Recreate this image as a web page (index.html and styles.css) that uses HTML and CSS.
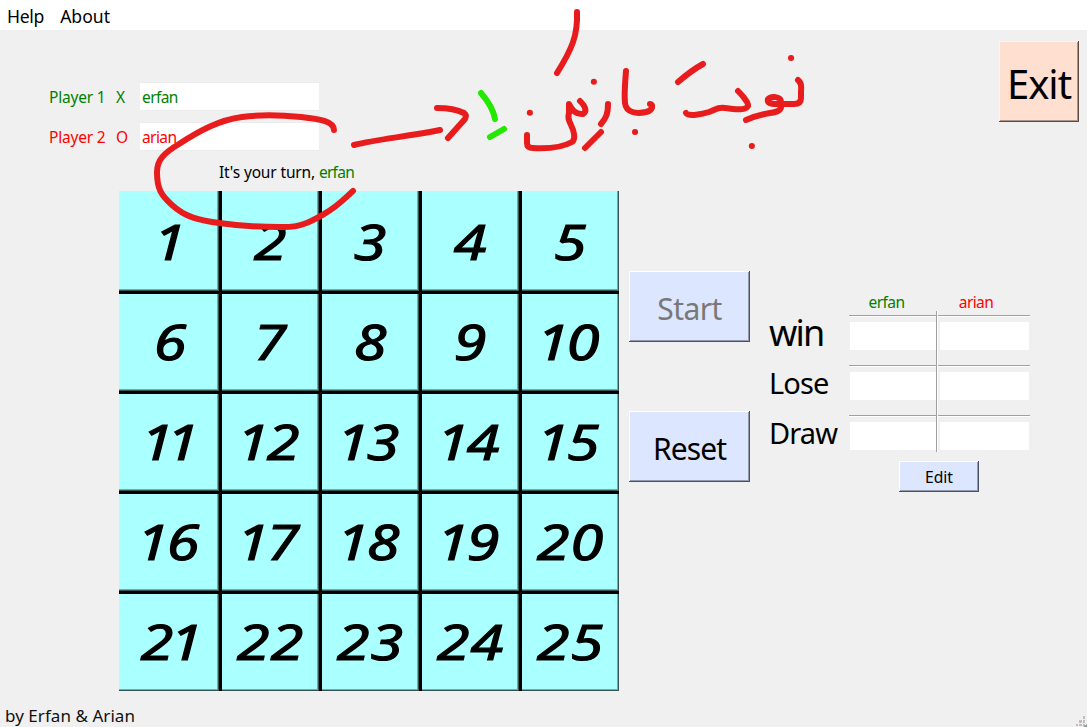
FILE: index.html
```html
<!DOCTYPE html>
<html lang="en">
<head>
<meta charset="utf-8">
<title>Tic Tac Toe</title>
<link rel="stylesheet" href="styles.css">
</head>
<body>
<nav class="menu"><span>Help</span><span>About</span></nav>
<main class="main">
  <section class="left">
    <div class="player green"><label class="name">Player 1</label><span class="mark">X</span><div class="field">erfan</div></div>
    <div class="player red"><label class="name">Player 2</label><span class="mark">O</span><div class="field">arian</div></div>
    <p class="turn">It's your turn, <span class="green tight">erfan</span></p>
    <div class="board">
      <div class="cell"><span><i class="one">1</i></span></div><div class="cell"><span><i>2</i></span></div><div class="cell"><span><i>3</i></span></div><div class="cell"><span><i>4</i></span></div><div class="cell"><span><i>5</i></span></div>
      <div class="cell"><span><i>6</i></span></div><div class="cell"><span><i>7</i></span></div><div class="cell"><span><i>8</i></span></div><div class="cell"><span><i>9</i></span></div><div class="cell"><span><i class="one">1</i><i>0</i></span></div>
      <div class="cell"><span class="eleven">11</span></div><div class="cell"><span><i class="one">1</i><i>2</i></span></div><div class="cell"><span><i class="one">1</i><i>3</i></span></div><div class="cell"><span><i class="one">1</i><i>4</i></span></div><div class="cell"><span><i class="one">1</i><i>5</i></span></div>
      <div class="cell"><span><i class="one">1</i><i>6</i></span></div><div class="cell"><span><i class="one">1</i><i>7</i></span></div><div class="cell"><span><i class="one">1</i><i>8</i></span></div><div class="cell"><span><i class="one">1</i><i>9</i></span></div><div class="cell"><span><i>2</i><i>0</i></span></div>
      <div class="cell"><span><i>2</i><i class="one">1</i></span></div><div class="cell"><span><i>2</i><i>2</i></span></div><div class="cell"><span><i>2</i><i>3</i></span></div><div class="cell"><span><i>2</i><i>4</i></span></div><div class="cell"><span><i>2</i><i>5</i></span></div>
    </div>
  </section>
  <section class="right">
    <button class="btn exit">Exit</button>
    <div class="panel">
      <div class="actions">
        <button class="btn start" disabled>Start</button>
        <button class="btn reset">Reset</button>
      </div>
      <div class="labels"><span class="win">win</span><span>Lose</span><span>Draw</span></div>
      <div class="score">
        <div class="table">
          <span class="head green">erfan</span><span></span><span class="head red arian">arian</span>
          <div class="slot"></div><div class="divider"></div><div class="slot second"></div>
          <div class="slot"></div><div class="slot second"></div>
          <div class="slot"></div><div class="slot second"></div>
        </div>
        <button class="btn edit">Edit</button>
      </div>
    </div>
  </section>
</main>
<footer class="footer"><span>by Erfan &amp; Arian</span>
  <svg class="grip" width="11" height="11" viewBox="0 0 11 11"><path d="M7 0h2v3h-2zM3 4h3v3h-3zM7 4h2v3h-2zM0 8h2v2h-2zM3 8h3v2h-3zM7 8h2v2h-2z" fill="#bfbfbf"/><path d="M7 11l4-3v3z" fill="#8d9994"/></svg>
</footer>
<svg class="ink" width="1087" height="727" viewBox="0 0 1087 727">
  <path d="M334 130C334 121 319 119 301 117C280 115 257 115 242 117C219 120 199 131 179 144C164 153 157 160 157 172C157 189 161 195 172 205C185 217 198 220 219 223C240 226 260 227 280 227C300 228 310 222 324 214C337 207 343 200 353 191"/>
  <path d="M354 145C378 139 405 137 440 130M437 108C451 108 458 110 464 113Q467 115 465 119L448 138"/>
  <path d="M577 12C578 35 572 49 557 73M529.8 112.8h.1M593.8 81.8h.1"/>
  <path d="M527 135V143Q527 148 533 148C550 149 563 147 572 142C576 139 574 131 571 125C568 119 568 117 569 113V104Q574 115 583 114Q589 110 580 101"/>
  <path d="M608 104C608 114 606 118 601 124M601 132L585 148"/>
  <path d="M626 71C625 85 624 94 625 103C626 113 637 114 646 112C654 110 653 104 650 104M635 132h.1"/>
  <path d="M678 82Q692 70 703 64M686 113C688 117 703 114 709 112C717 109 717 107 725 108C738 110 746 110 748 106C749 103 742 95 738 91"/>
  <path d="M791 58h.1M798 80Q802 83 801 91V98Q801 104 794 104H777C770 104 767 103 768 99C771 96 781 96 781 102C783 110 778 112 770 113C758 115 753 117 746 120M751.8 146h.1"/>
  <path class="lime" d="M481 93Q493 107 495 119M490 137L504 129"/>
</svg>
</body>
</html>
```
FILE: styles.css
```css
* { box-sizing: border-box; }
body {
  margin: 0;
  width: 1087px;
  height: 727px;
  overflow: hidden;
  display: flex;
  flex-direction: column;
  background: #f0f0f0;
  color: #000;
  font: 15.5px/20px "Noto Sans", sans-serif;
  letter-spacing: -.2px;
  position: relative;
}
.green { color: #008000; }
.red { color: #f00; }
.menu {
  height: 30px;
  background: #fff;
  display: flex;
  gap: 16px;
  padding: 5px 7px;
  font-size: 17.6px;
  line-height: 23px;
  letter-spacing: 0;
}
.menu span:first-child { letter-spacing: -.3px; }
.main { flex: 1; display: flex; }
.left { width: 629px; padding-top: 52px; }
.player { display: flex; height: 29px; margin: 0 0 11px 49px; align-items: center; }
.name { width: 67px; }
.mark { width: 24px; }
.name, .mark { padding-top: 1px; }
.field { width: 179px; height: 29px; padding: 5px 2px; background: #fff; border: 1px solid #ececec; border-width: 1px 0; letter-spacing: -.6px; line-height: 18px; }
.turn { margin: 0 0 9px 219px; height: 20px; letter-spacing: -.15px; white-space: nowrap; }
.tight { letter-spacing: -.7px; }
.board {
  margin-left: 119px;
  width: 500px;
  height: 500px;
  display: grid;
  grid-template: repeat(5, 100px) / repeat(5, 100px);
  border-top: 1px solid #d8ffff;
  border-left: 1px solid #d8ffff;
}
.cell {
  background: #aff;
  border: 0 solid #000;
  border-width: 3px 0 0 3px;
  box-shadow: inset -1px -1px #385555, inset -2px -2px #72aaaa;
  display: flex;
  align-items: center;
  justify-content: center;
  font-size: 49.5px;
  line-height: 60px;
  letter-spacing: 0;
  margin: -1px 1px 1px -1px;
}
.cell:nth-child(-n+5) { border-top: 0; padding-top: 3px; }
.cell:nth-child(5n+1) { border-left: 0; padding-left: 3px; }
.cell span { transform: scaleX(1.2); display: flex; margin: -4px 2px 0 0; }
.cell i, .eleven { -webkit-text-stroke: 1.1px #000; }
.cell i { width: 28px; text-align: center; }
.cell i.one { width: 22px; text-indent: -3px; }
.cell .eleven { font-style: italic; letter-spacing: -6px; margin-right: 8px; }
.right { flex: 1; padding: 11px 8px 0 0; display: flex; flex-direction: column; align-items: flex-start; }
.btn {
  background: #dce6ff;
  border: 0;
  padding: 0;
  font-family: inherit;
  color: #000;
  box-shadow: inset -1px -1px #495265, inset 1px 1px #fff, inset -2px -2px #929ab0;
}
.exit { align-self: flex-end; width: 80px; height: 81px; padding-top: 3px; background: #ffdfcf; font-size: 40px; letter-spacing: -1px; box-shadow: inset -1px -1px #5d4b43, inset 1px 1px #fff2eb, inset -2px -2px #aa958a; }
.panel { display: flex; margin-top: 149px; }
.actions { display: flex; flex-direction: column; gap: 69px; width: 121px; }
.start, .reset { height: 71px; padding-top: 3px; font-size: 30px; letter-spacing: -.9px; }
.start { color: #787878; letter-spacing: -.6px; }
.labels { display: flex; flex-direction: column; width: 80px; margin-left: 19px; padding-top: 37px; font-size: 29px; line-height: 50px; letter-spacing: -.9px; }
.win { font-size: 36px; letter-spacing: -1.8px; }
.score { padding-top: 20px; display: flex; flex-direction: column; }
.table { display: grid; grid-template: 24px repeat(3, 50px) / 87px 2px 92px; }
.head { text-align: center; letter-spacing: -.6px; line-height: 22px; padding-right: 12px; }
.arian { padding-right: 16px; }
.slot { border-top: 1px solid #a0a0a0; box-shadow: inset 0 1px #fff; padding: 6px 0 0 1px; }
.slot::before { content: ""; display: block; height: 28px; background: #fff; }
.second { padding: 6px 1px 0 2px; }
.divider { grid-row: 2 / 5; grid-column: 2; border-left: 1px solid #a0a0a0; background: #fff; margin: -4px 0 13px; }
.edit { width: 80px; height: 31px; margin: -4px 0 0 50px; font-size: 15.7px; position: relative; }
.footer { height: 22px; display: flex; justify-content: space-between; align-items: flex-end; padding-left: 5px; font-size: 17px; line-height: 23px; letter-spacing: .05px; color: #111; }
.grip { display: block; }
.ink { position: absolute; left: 0; top: 0; pointer-events: none; fill: none; stroke: #e81c1c; stroke-width: 6; stroke-linecap: round; stroke-linejoin: round; }
.lime { stroke: #23e800; }
```
